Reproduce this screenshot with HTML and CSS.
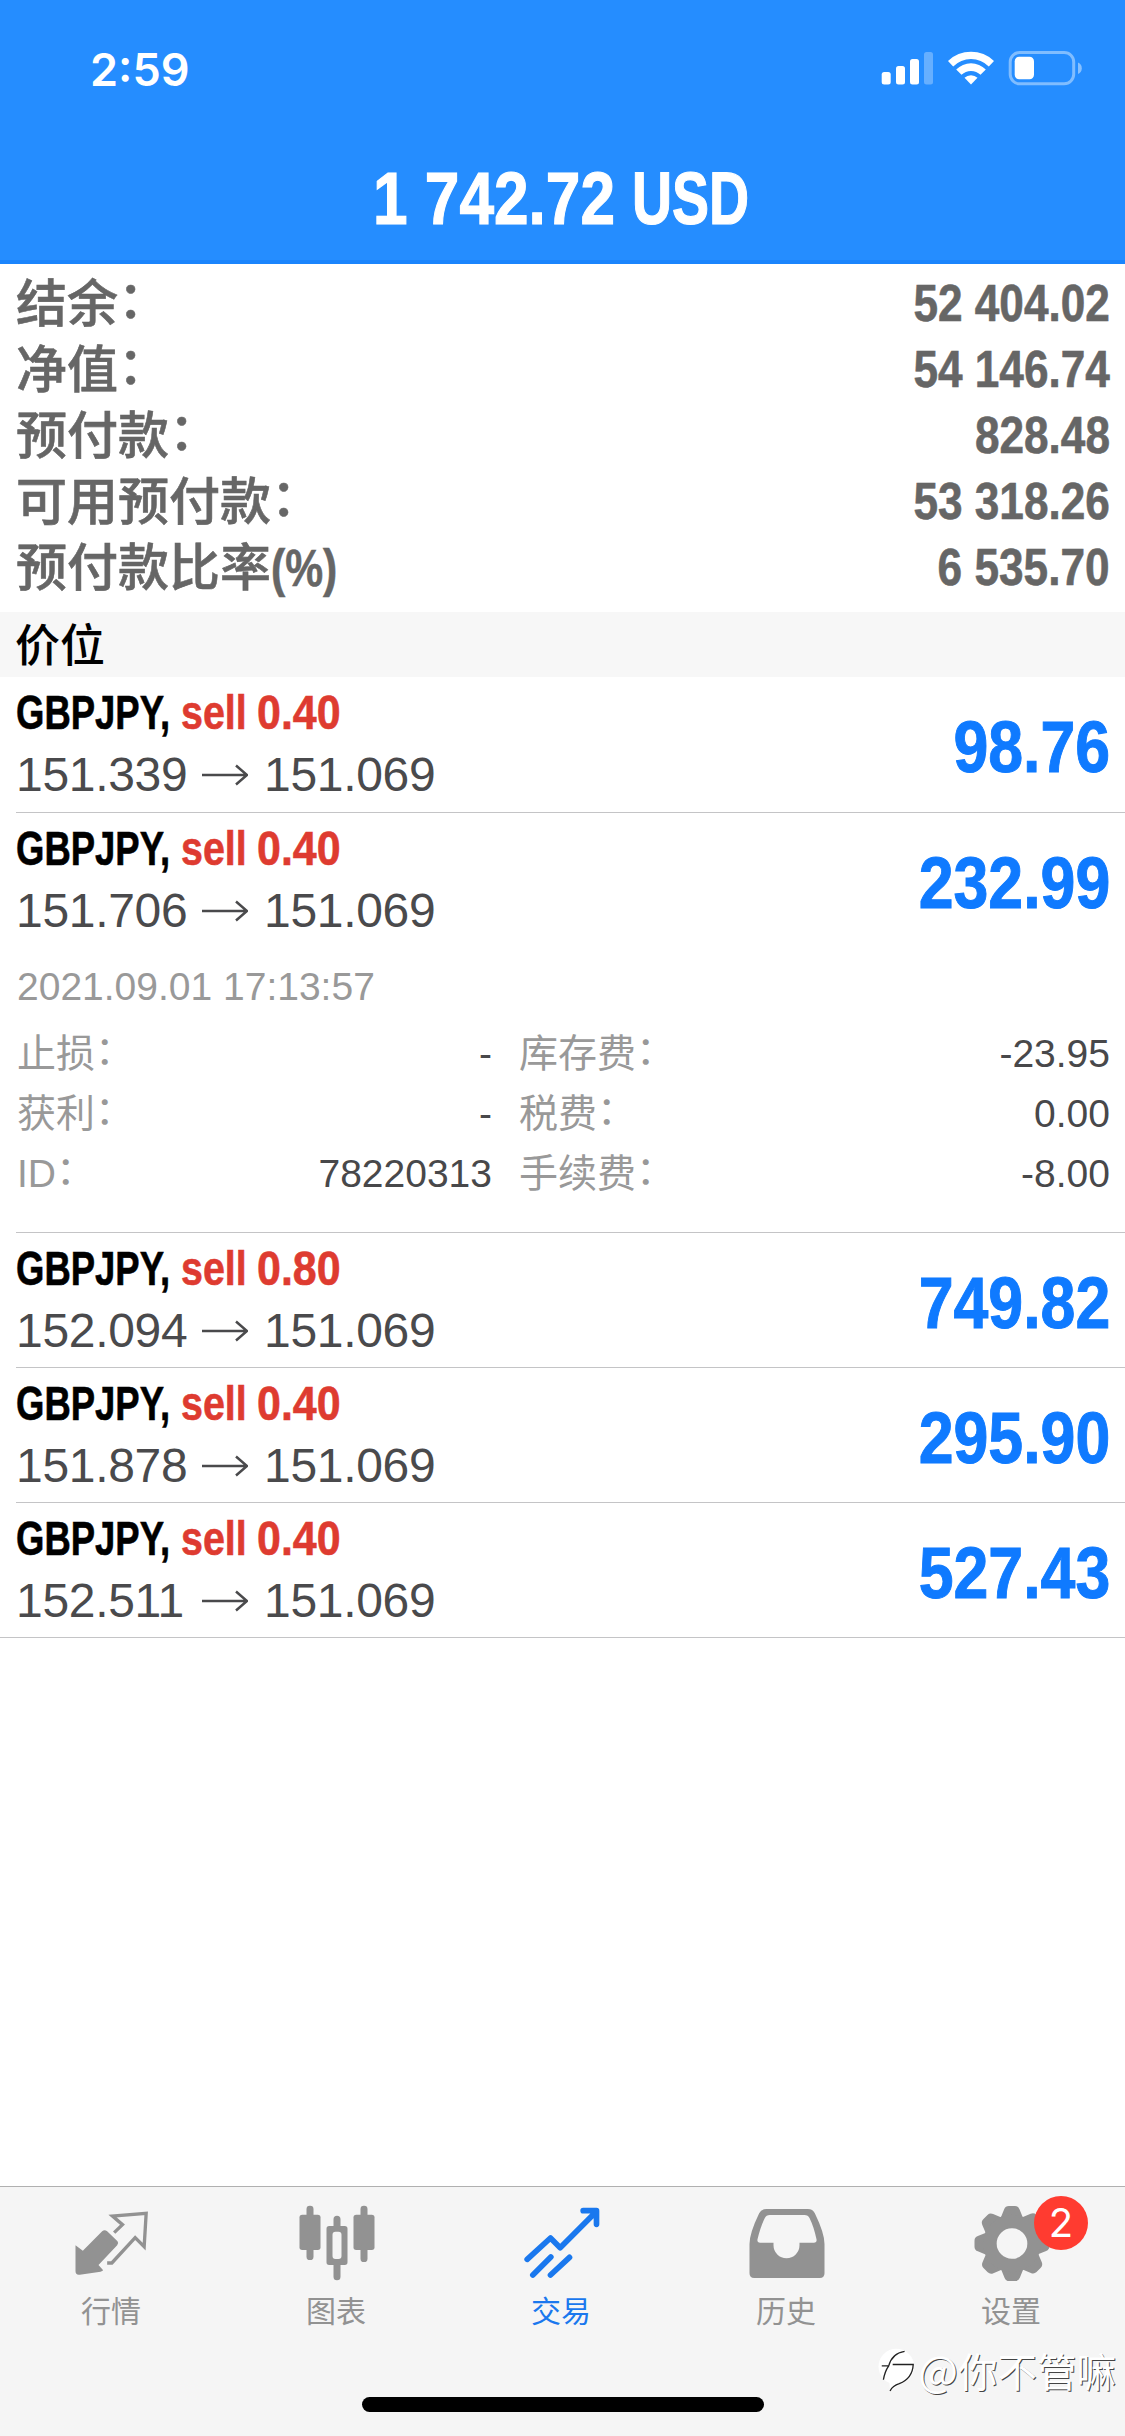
FILE: index.html
```html
<!DOCTYPE html>
<html lang="zh-CN">
<head>
<meta charset="utf-8">
<title>交易</title>
<link rel="stylesheet" href="styles.css">
</head>
<body>
<div class="app">
  <header class="header">
    <div class="status">
      <span class="time">2:59</span>
      <svg class="status-icons" viewBox="0 0 204 36" width="204" height="36">
        <g fill="#fff">
          <rect x="1.7" y="21" width="9" height="12.5" rx="2.5"/>
          <rect x="16" y="15" width="9" height="18.5" rx="2.5"/>
          <rect x="30" y="8" width="9" height="25.5" rx="2.5"/>
          <rect x="44" y="1" width="9" height="32.5" rx="2.5" opacity=".3"/>
          <path d="M68 10 A33 33 0 0 1 114 10 L108.800 15.400 A25.200 25.200 0 0 0 73.200 15.400 Z"/>
          <path d="M76.200 18.400 A21 21 0 0 1 105.800 18.400 L100.500 23.800 A13.800 13.800 0 0 0 81.500 23.800 Z"/>
          <path d="M84.500 26.800 A9.500 9.500 0 0 1 97.500 26.800 L91 33.500 Z"/>
          <rect x="134.700" y="5.700" width="19.300" height="22.600" rx="4.500"/>
          <path d="M198 11.500 q3.800 1.500 3.800 5.700 t-3.800 5.700 z" opacity=".45"/>
        </g>
        <rect x="130.200" y="1.500" width="63.500" height="31.300" rx="9.500" fill="none" stroke="#fff" stroke-opacity=".42" stroke-width="3"/>
      </svg>
    </div>
    <h1 class="title"><span class="title-sum">1 742.72</span><span class="title-cur">USD</span></h1>
  </header>

  <section class="summary">
    <div class="sum-row"><span class="sum-label">结余<span class="colon">：</span></span><span class="sum-value">52 404.02</span></div>
    <div class="sum-row"><span class="sum-label">净值<span class="colon">：</span></span><span class="sum-value">54 146.74</span></div>
    <div class="sum-row"><span class="sum-label">预付款<span class="colon">：</span></span><span class="sum-value">828.48</span></div>
    <div class="sum-row"><span class="sum-label">可用预付款<span class="colon">：</span></span><span class="sum-value">53 318.26</span></div>
    <div class="sum-row"><span class="sum-label">预付款比率<span class="pct">(%)</span></span><span class="sum-value">6 535.70</span></div>
  </section>

  <h2 class="section-head">价位</h2>

  <main class="positions">
    <article class="position">
      <div class="pos-main">
        <div class="deal">
          <div class="deal-name"><span class="symbol">GBPJPY,</span><span class="side">sell</span><span class="lots">0.40</span></div>
          <div class="prices"><span class="price">151.339</span><svg class="arrow" viewBox="0 0 46 22"><path d="M0 11H45M34 1.500L45 11L34 20.500"/></svg><span class="price">151.069</span></div>
        </div>
        <span class="profit">98.76</span>
      </div>
    </article>
    <article class="position">
      <div class="pos-main">
        <div class="deal">
          <div class="deal-name"><span class="symbol">GBPJPY,</span><span class="side">sell</span><span class="lots">0.40</span></div>
          <div class="prices"><span class="price">151.706</span><svg class="arrow" viewBox="0 0 46 22"><path d="M0 11H45M34 1.500L45 11L34 20.500"/></svg><span class="price">151.069</span></div>
        </div>
        <span class="profit">232.99</span>
      </div>
      <div class="details">
        <div class="date">2021.09.01 17:13:57</div>
        <div class="grid">
          <div class="cell"><span class="key">止损<span class="colon">：</span></span><span class="val">-</span></div>
          <div class="cell"><span class="key">库存费<span class="colon">：</span></span><span class="val">-23.95</span></div>
          <div class="cell"><span class="key">获利<span class="colon">：</span></span><span class="val">-</span></div>
          <div class="cell"><span class="key">税费<span class="colon">：</span></span><span class="val">0.00</span></div>
          <div class="cell"><span class="key">ID<span class="colon">：</span></span><span class="val">78220313</span></div>
          <div class="cell"><span class="key">手续费<span class="colon">：</span></span><span class="val">-8.00</span></div>
        </div>
      </div>
    </article>
    <article class="position">
      <div class="pos-main">
        <div class="deal">
          <div class="deal-name"><span class="symbol">GBPJPY,</span><span class="side">sell</span><span class="lots">0.80</span></div>
          <div class="prices"><span class="price">152.094</span><svg class="arrow" viewBox="0 0 46 22"><path d="M0 11H45M34 1.500L45 11L34 20.500"/></svg><span class="price">151.069</span></div>
        </div>
        <span class="profit">749.82</span>
      </div>
    </article>
    <article class="position">
      <div class="pos-main">
        <div class="deal">
          <div class="deal-name"><span class="symbol">GBPJPY,</span><span class="side">sell</span><span class="lots">0.40</span></div>
          <div class="prices"><span class="price">151.878</span><svg class="arrow" viewBox="0 0 46 22"><path d="M0 11H45M34 1.500L45 11L34 20.500"/></svg><span class="price">151.069</span></div>
        </div>
        <span class="profit">295.90</span>
      </div>
    </article>
    <article class="position">
      <div class="pos-main">
        <div class="deal">
          <div class="deal-name"><span class="symbol">GBPJPY,</span><span class="side">sell</span><span class="lots">0.40</span></div>
          <div class="prices"><span class="price">152.511</span><svg class="arrow" viewBox="0 0 46 22"><path d="M0 11H45M34 1.500L45 11L34 20.500"/></svg><span class="price">151.069</span></div>
        </div>
        <span class="profit">527.43</span>
      </div>
    </article>
  </main>

  <nav class="tabbar">
    <div class="tabs">
      <div class="tab">
        <svg class="tab-icon" viewBox="202.5 90 270 255">
          <path d="M225 226 L247 242 L305 184 Q312 177 320 184 L351 214 Q356 220 350 226 L294 285 L308 301 Q306 304 300 305 L238 314 Q225 316 225 303 Z" fill="currentColor"/>
          <path d="M341 188 L366 164 L336 138 L437 130 L431 230 L404 203 L334 279 H320" fill="none" stroke="currentColor" stroke-width="10"/>
        </svg>
        <span class="tab-label">行情</span>
      </div>
      <div class="tab">
        <svg class="tab-icon" viewBox="877.5 90 270 255">
          <g fill="currentColor">
            <rect x="897" y="134" width="63" height="106" rx="8"/><rect x="918" y="107" width="21" height="163" rx="10"/>
            <rect x="1059" y="134" width="63" height="106" rx="8"/><rect x="1080" y="107" width="21" height="169" rx="10"/>
            <path fill-rule="evenodd" d="M986 168h47q8 0 8 8v101q0 8 -8 8h-47q-8 0 -8 -8v-101q0 -8 8 -8z M1005 185q-9 0 -9 9v64q0 9 9 9h9q9 0 9 -9v-64q0 -9 -9 -9z"/>
            <path d="M999 169v-21a10.500 10.500 0 0 1 21 0v21z M999 284v36a10.500 10.500 0 0 0 21 0v-36z"/>
          </g>
        </svg>
        <span class="tab-label">图表</span>
      </div>
      <div class="tab active">
        <svg class="tab-icon" viewBox="202.5 90 270 255">
          <path d="M230 268 L300 204 L329 233 L436 126 M398 122 H438 V163 M247 315 L301 261 M300 315 L357 262" fill="none" stroke="currentColor" stroke-width="17" stroke-linecap="round" stroke-linejoin="round"/>
        </svg>
        <span class="tab-label">交易</span>
      </div>
      <div class="tab">
        <svg class="tab-icon" viewBox="877.5 90 270 255">
          <path fill="currentColor" fill-rule="evenodd" d="M948 117 H1072 Q1087 117 1093 130 Q1122 190 1122 222 V310 Q1122 324 1108 324 H911 Q897 324 897 310 V222 Q897 190 926 130 Q932 117 948 117 Z M958 135 Q947 135 943 144 Q930 170 921 208 Q919 218 929 218 H969 V226 A39 39 0 0 0 1047 226 V218 H1090 Q1100 218 1098 208 Q1090 170 1077 144 Q1073 135 1062 135 Z"/>
        </svg>
        <span class="tab-label">历史</span>
      </div>
      <div class="tab">
        <svg class="tab-icon" viewBox="352.5 90 270 255">
          <g fill="currentColor">
            <path id="tooth" d="M448 150 L461 118 Q465 108 475 108 H493 Q503 108 507 118 L520 150 Z"/>
            <use href="#tooth" transform="rotate(45 484.500 220.500)"/>
            <use href="#tooth" transform="rotate(90 484.500 220.500)"/>
            <use href="#tooth" transform="rotate(135 484.500 220.500)"/>
            <use href="#tooth" transform="rotate(180 484.500 220.500)"/>
            <use href="#tooth" transform="rotate(225 484.500 220.500)"/>
            <use href="#tooth" transform="rotate(270 484.500 220.500)"/>
            <use href="#tooth" transform="rotate(315 484.500 220.500)"/>
          </g>
          <circle cx="484.500" cy="220.500" r="66" fill="none" stroke="currentColor" stroke-width="40"/>
        </svg>
        <span class="badge">2</span>
        <span class="tab-label">设置</span>
      </div>
    </div>
    <div class="home-indicator"></div>
    <div class="watermark">
      <svg class="wm-logo" viewBox="80 545 120 145">
        <circle cx="141" cy="610" r="54" fill="#fff"/><path d="M120 655 L122 684 L165 655 Z" fill="#fff"/>
        <path d="M122 684 Q130 668 150 662 Q190 646 192 604 H130 M97 608 H118 Q128 570 166 564 M118 608 Q106 625 102 650" fill="none" stroke="#222" stroke-width="4"/>
      </svg><span><span class="wm-at">@</span>你不管嘛</span>
    </div>
  </nav>
</div>
</body>
</html>
```
FILE: styles.css
```css
* { box-sizing: border-box; }

body {
  margin: 0;
  background: #fff;
  font-family: "Liberation Sans", "Noto Sans CJK SC", sans-serif;
}

.app {
  display: flex;
  flex-direction: column;
  width: 1125px;
  height: 2436px;
  overflow: hidden;
  background: #fff;
}

/* Header */
.header {
  flex: none;
  height: 264px;
  background: #258dff;
  border-bottom: 4px solid #1a85fd;
  color: #fff;
}

.status {
  display: flex;
  justify-content: space-between;
  align-items: flex-start;
  height: 139px;
  padding: 51px 41px 0 90px;
}

.time {
  font: 600 45px/37px Inter, sans-serif;
}

.title {
  display: flex;
  gap: 17px;
  width: 379px;
  margin: 0 auto;
  font-size: 74px;
  line-height: 120px;
  font-weight: 700;
  white-space: nowrap;
  -webkit-text-stroke: 1.2px #fff;
}

.title-sum,
.title-cur {
  display: block;
  transform-origin: left;
}

.title-sum { width: 242px; transform: scaleX(.84); }
.title-cur { transform: scaleX(.75); }

/* Account summary */
.summary {
  flex: none;
  height: 348px;
  padding: 7px 15px 0 16px;
  color: #666;
}

.sum-row {
  display: flex;
  justify-content: space-between;
  height: 66px;
  line-height: 66px;
  white-space: nowrap;
}

.sum-label {
  padding-top: 1px;
  font-size: 51px;
  font-weight: 500;
  -webkit-text-stroke: .6px #666;
}

.colon {
  display: inline-block;
  transform: translateY(-.07em);
}

.pct {
  display: inline-block;
  font-weight: 700;
  transform: scaleX(.835);
  transform-origin: left;
}

.sum-value {
  font-size: 51px;
  font-weight: 700;
  transform: scaleX(.866);
  transform-origin: right;
  -webkit-text-stroke: .6px #666;
}

.section-head {
  flex: none;
  height: 65px;
  margin: 0;
  padding-left: 15px;
  background: #f7f7f7;
  color: #000;
  font: 500 45px/62px "Noto Sans CJK SC", sans-serif;
}

/* Positions */
.position {
  margin-left: 16px;
  border-bottom: 1px solid #c4c4c6;
}

.position:last-child {
  margin-left: 0;
  padding-left: 16px;
}

.pos-main {
  display: flex;
  justify-content: space-between;
  height: 135px;
  padding-right: 15px;
}

.position:not(:nth-child(2)) .pos-main { height: 134px; }
.position:first-child .pos-main { height: 135px; }

.deal-name {
  display: flex;
  height: 66px;
  font-size: 48px;
  font-weight: 700;
  line-height: 71px;
  white-space: nowrap;
  -webkit-text-stroke-width: .6px;
}

.deal-name span {
  display: block;
  transform-origin: left;
}

.symbol { width: 165px; color: #000; transform: scaleX(.76); }
.side { width: 76px; color: #de3b30; transform: scaleX(.82); }
.lots { color: #de3b30; transform: scaleX(.895); }

.prices {
  display: flex;
  align-items: center;
  height: 64px;
  color: #4a4a4c;
  font-size: 48px;
  line-height: 64px;
  letter-spacing: -.3px;
}

.price { width: 171px; }

.arrow {
  width: 46px;
  height: 22px;
  margin: 0 16px 0 15px;
  fill: none;
  stroke: #4a4a4c;
  stroke-width: 2.5;
}

.profit {
  color: #0f7aff;
  font-size: 72px;
  font-weight: 700;
  line-height: 140px;
  transform: scaleX(.87);
  transform-origin: right;
  -webkit-text-stroke: 1px #0f7aff;
}

.details {
  height: 284px;
  padding: 17px 15px 0 1px;
  font-size: 39px;
}

.date {
  height: 59px;
  color: #999;
  line-height: 44px;
}

.grid {
  display: grid;
  grid-template-columns: 475px 1fr;
  grid-auto-rows: 60px;
  column-gap: 27px;
}

.cell {
  display: flex;
  justify-content: space-between;
  line-height: 60px;
}

.key { color: #999; }

.val { color: #48484a; }

/* Tab bar */
.tabbar {
  position: relative;
  flex: none;
  height: 250px;
  margin-top: auto;
  border-top: 1px solid #b0b0b0;
  background: #f5f5f5;
}

.tabs {
  display: grid;
  grid-template-columns: repeat(5, 1fr);
  height: 210px;
  padding-top: 13px;
}

.tab {
  position: relative;
  display: flex;
  flex-direction: column;
  align-items: center;
  color: #929292;
}

.tab.active { color: #1a78ee; }

.tab-icon {
  width: 90px;
  height: 85px;
}

.tab-label {
  margin-top: 2px;
  margin-right: 3px;
  font: 400 30px/44px "Noto Sans CJK SC", sans-serif;
}

.badge {
  position: absolute;
  left: 134px;
  top: -4px;
  width: 54px;
  height: 54px;
  border-radius: 50%;
  background: #ff3b30;
  color: #fff;
  font: 400 40px/54px Inter, sans-serif;
  text-align: center;
}

.home-indicator {
  width: 402px;
  height: 15px;
  margin: 0 auto;
  border-radius: 8px;
  background: #000;
}

.watermark {
  position: absolute;
  right: 9px;
  top: 152px;
  display: flex;
  align-items: center;
  gap: 2px;
  height: 60px;
  color: #fff;
  font: 400 39.500px/60px "Noto Sans CJK SC", sans-serif;
  text-shadow: 1px 1px 0 #444;
}

.wm-at {
  font-size: 42px;
}

.wm-logo {
  width: 40px;
  height: 48px;
}
```
